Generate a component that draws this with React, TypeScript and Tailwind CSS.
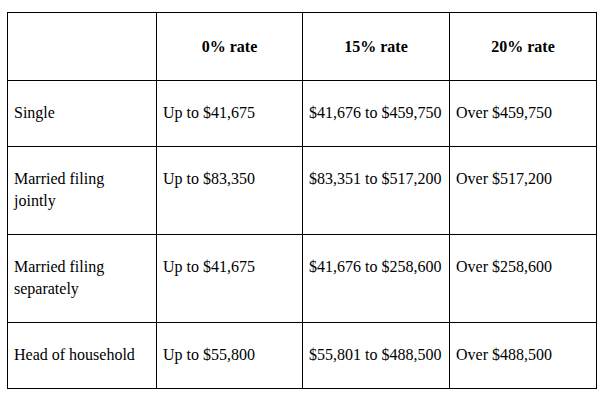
const headers = ["0% rate", "15% rate", "20% rate"];

const rows: { label: string; cells: string[] }[] = [
    { label: "Single", cells: ["Up to $41,675", "$41,676 to $459,750", "Over $459,750"] },
    { label: "Married filing jointly", cells: ["Up to $83,350", "$83,351 to $517,200", "Over $517,200"] },
    { label: "Married filing separately", cells: ["Up to $41,675", "$41,676 to $258,600", "Over $258,600"] },
    { label: "Head of household", cells: ["Up to $55,800", "$55,801 to $488,500", "Over $488,500"] },
];

export default function App() {
    return (
        <div className="min-h-[401px] w-[605px] bg-white pt-[12px] pl-[7px] font-['Liberation_Serif','Times_New_Roman',serif] text-black">
            <div className="grid w-[590px] grid-cols-[149px_146px_147px_147px] border-r border-b border-black text-[16px] leading-[22px]">
                {/* Header row */}
                <div className="h-[68px] border-t border-l border-black" />
                {headers.map((h) => (
                    <div
                        key={h}
                        className="flex h-[68px] items-center justify-center border-t border-l border-black pt-[1px] font-bold"
                    >
                        {h}
                    </div>
                ))}

                {/* Body rows */}
                {rows.map((row) => (
                    <div key={row.label} className="contents">
                        <div className="border-t border-l border-black pt-[21px] pr-[10px] pb-[22px] pl-[6px]">
                            {row.label}
                        </div>
                        {row.cells.map((c, i) => (
                            <div
                                key={i}
                                className="whitespace-nowrap border-t border-l border-black px-[6px] pt-[21px] pb-[22px]"
                            >
                                {c}
                            </div>
                        ))}
                    </div>
                ))}
            </div>
        </div>
    );
}
